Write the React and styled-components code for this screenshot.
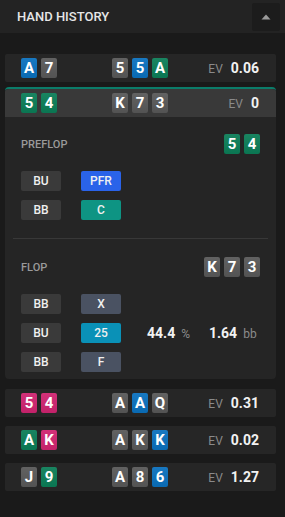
import styled, { createGlobalStyle } from 'styled-components';

const GlobalStyle = createGlobalStyle`
  html, body {
    margin: 0;
    padding: 0;
    background: #1a1a1a;
    font-family: Roboto, "Liberation Sans", sans-serif;
    color: #fff;
  }
`;

const SUIT = {
  s: '#585858',
  h: '#cf2470',
  d: '#0a70bd',
  c: '#0b7d57',
};

const hands = [
  { hero: ['Ad', '7s'], board: ['5s', '5d', 'Ac'], ev: '0.06' },
  { hero: ['5c', '4c'], board: ['Ks', '7s', '3s'], ev: '0', open: true },
  { hero: ['5h', '4h'], board: ['As', 'Ad', 'Qs'], ev: '0.31' },
  { hero: ['Ac', 'Kh'], board: ['As', 'Ks', 'Kd'], ev: '0.02' },
  { hero: ['Js', '9c'], board: ['As', '8s', '6d'], ev: '1.27' },
];

const parse = (c) => ({ rank: c[0], suit: c[c.length - 1] });

const ACTION = {
  PFR: '#2a63e9',
  C: '#0e9483',
  X: '#4a5262',
  F: '#4a5262',
  25: '#0a91b7',
};

const Page = styled.div`
  width: 285px;
  min-height: 517px;
  background: #1a1a1a;
`;

const Header = styled.div`
  height: 33px;
  background: #232323;
  display: flex;
  align-items: center;
  justify-content: space-between;
  padding: 0 5px 0 17px;
  box-sizing: border-box;
`;

const Title = styled.div`
  font-size: 13px;
  font-weight: 500;
  color: #e6e6e6;
`;

const CollapseButton = styled.button`
  width: 28px;
  height: 28px;
  border: none;
  border-radius: 2px;
  background: #1c1c1c;
  display: flex;
  align-items: center;
  justify-content: center;
  padding: 0;
`;

const List = styled.div`
  display: flex;
  flex-direction: column;
  padding: 21px 9px 0 5px;
`;

const Row = styled.div`
  height: 28px;
  display: flex;
  align-items: center;
  padding: 0 17px 0 16px;
  background: ${(p) => (p.$open ? '#393939' : '#262626')};
  border-radius: ${(p) => (p.$open ? '3px 3px 0 0' : '2px')};
  margin-bottom: ${(p) => (p.$open ? 0 : '9px')};
`;

const Expanded = styled.div`
  border-top: 2px solid #0b7d6a;
  border-radius: 4px;
  background: #252525;
  overflow: hidden;
  margin: -4px 0 10px;
`;

const CardGroup = styled.div`
  display: flex;
  gap: 4px;
  width: ${(p) => p.$w || 'auto'};
`;

const Card = styled.div`
  width: 16px;
  height: 20px;
  border-radius: 2px;
  background: ${(p) => p.$color};
  background-image: linear-gradient(rgba(255, 255, 255, 0.06), rgba(0, 0, 0, 0.06));
  display: flex;
  align-items: center;
  justify-content: center;
  font-size: 15px;
  font-weight: 700;
  color: #fff;
  line-height: 1;
`;

const Ev = styled.div`
  margin-left: auto;
  display: flex;
  align-items: baseline;
  gap: 8px;
`;

const EvLabel = styled.span`
  font-size: 12px;
  color: #8a8a8a;
`;

const EvValue = styled.span`
  font-size: 14px;
  font-weight: 700;
  color: #f2f2f2;
`;

const Street = styled.div`
  padding: ${(p) => p.$pad};
  border-bottom: ${(p) => (p.$divider ? '1px solid #383838' : 'none')};
  margin: 0 8px;
  padding-left: 8px;
  padding-right: 8px;
`;

const StreetHead = styled.div`
  display: flex;
  justify-content: space-between;
  align-items: center;
  margin-bottom: 17px;
`;

const StreetLabel = styled.div`
  font-size: 11px;
  font-weight: 500;
  color: #9a9a9a;
`;

const ActionsWrap = styled.div`
  display: flex;
  align-items: center;
`;

const Actions = styled.div`
  display: flex;
  flex-direction: column;
  gap: 9px;
`;

const ActionRow = styled.div`
  display: flex;
  gap: 20px;
`;

const Chip = styled.div`
  width: 40px;
  height: 20px;
  border-radius: 2px;
  background: ${(p) => p.$bg || '#3a3a3a'};
  display: flex;
  align-items: center;
  justify-content: center;
  font-size: 12px;
  font-weight: 500;
  color: #f0f0f0;
`;

const Stats = styled.div`
  display: flex;
  align-items: baseline;
  gap: 19px;
  margin-left: 26px;
`;

const Stat = styled.span`
  font-size: 14px;
  font-weight: 700;
  color: #f2f2f2;
`;

const Unit = styled.span`
  font-size: 12px;
  font-weight: 400;
  color: #8c8c8c;
  margin-left: 6px;
`;

const Cards = ({ list, w }) => (
  <CardGroup $w={w}>
    {list.map((c, i) => {
      const { rank, suit } = parse(c);
      return (
        <Card key={i} $color={SUIT[suit]}>
          {rank}
        </Card>
      );
    })}
  </CardGroup>
);

const HandRow = ({ hand }) => (
  <Row $open={hand.open}>
    <Cards list={hand.hero} w="91px" />
    <Cards list={hand.board} />
    <Ev>
      <EvLabel>EV</EvLabel>
      <EvValue>{hand.ev}</EvValue>
    </Ev>
  </Row>
);

const ActionList = ({ rows }) => (
  <Actions>
    {rows.map(([pos, act], i) => (
      <ActionRow key={i}>
        <Chip>{pos}</Chip>
        <Chip $bg={ACTION[act]}>{act}</Chip>
      </ActionRow>
    ))}
  </Actions>
);

const App = () => (
  <Page>
    <GlobalStyle />
    <Header>
      <Title>HAND HISTORY</Title>
      <CollapseButton aria-label="collapse">
        <svg width="10" height="6" viewBox="0 0 10 6">
          <path d="M5 0.5 L9.5 5.5 L0.5 5.5 Z" fill="#9a9a9a" />
        </svg>
      </CollapseButton>
    </Header>
    <List>
      {hands.map((h, i) =>
        h.open ? (
          <Expanded key={i}>
            <HandRow hand={h} />
            <Street $pad="17px 0 18px" $divider>
              <StreetHead>
                <StreetLabel>PREFLOP</StreetLabel>
                <Cards list={['5c', '4c']} />
              </StreetHead>
              <ActionList rows={[['BU', 'PFR'], ['BB', 'C']]} />
            </Street>
            <Street $pad="18px 0 7px">
              <StreetHead>
                <StreetLabel>FLOP</StreetLabel>
                <Cards list={['Ks', '7s', '3s']} />
              </StreetHead>
              <ActionsWrap>
                <ActionList rows={[['BB', 'X'], ['BU', '25'], ['BB', 'F']]} />
                <Stats>
                  <Stat>
                    44.4<Unit>%</Unit>
                  </Stat>
                  <Stat>
                    1.64<Unit>bb</Unit>
                  </Stat>
                </Stats>
              </ActionsWrap>
            </Street>
          </Expanded>
        ) : (
          <HandRow key={i} hand={h} />
        )
      )}
    </List>
  </Page>
);

export default App;
